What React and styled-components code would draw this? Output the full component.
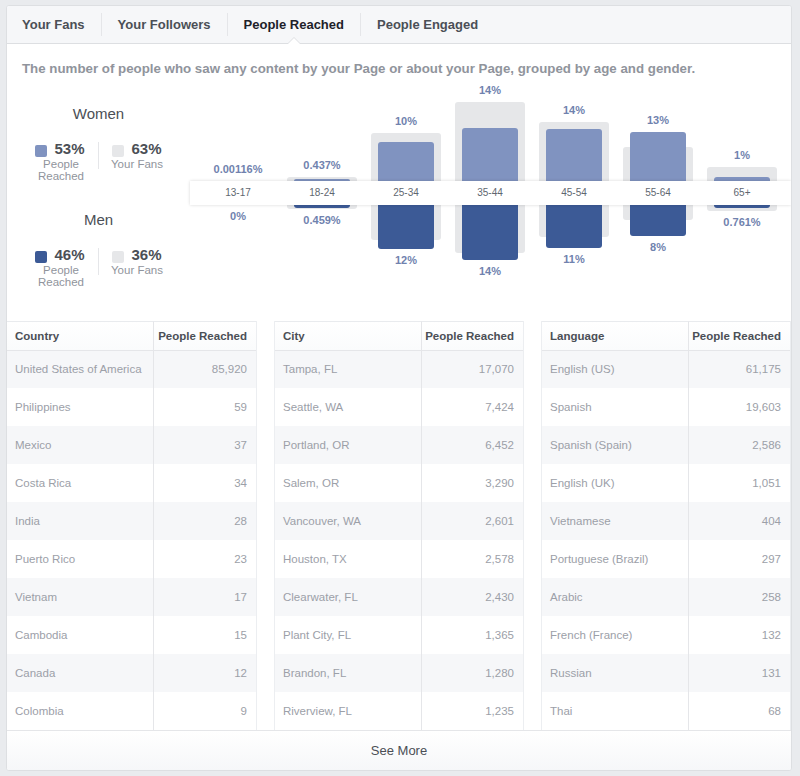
import React from 'react';
import styled, { createGlobalStyle } from 'styled-components';

const GlobalStyle = createGlobalStyle`
  body {
    margin: 0;
    padding: 5px 8px 6px 6px;
    background: #e9ebee;
    font-family: "Liberation Sans", Arial, Helvetica, sans-serif;
  }
`;

const Card = styled.div`
  width: 786px;
  box-sizing: border-box;
  background: #fff;
  border: 1px solid #dddfe2;
  border-radius: 3px;
  overflow: hidden;
`;

const Tabs = styled.div`
  display: flex;
  align-items: center;
  height: 37px;
  padding-left: 15px;
  background: #f6f7f9;
  border-bottom: 1px solid #dddfe2;
`;

const Tab = styled.div`
  position: relative;
  height: 23px;
  line-height: 23px;
  padding: 0 16px;
  font-size: 13px;
  font-weight: bold;
  color: ${p => (p.$active ? '#1d2129' : '#4b4f56')};
  border-right: ${p => (p.$last ? 'none' : '1px solid #e5e6e9')};
  &:first-child {
    padding-left: 0;
  }
  ${p => p.$active && `
    &::after {
      content: '';
      position: absolute;
      left: 50%;
      bottom: -8px;
      margin-left: -6px;
      border: 6px solid transparent;
      border-bottom-color: #fff;
      filter: drop-shadow(0 -1px 0 #dddfe2);
    }
  `}
`;

const ChartSection = styled.div`
  padding: 18px 0 16px 15px;
`;

const Description = styled.div`
  font-size: 13.3px;
  line-height: 14px;
  font-weight: bold;
  color: #90949c;
  margin-bottom: 5px;
  white-space: nowrap;
`;

const ChartBody = styled.div`
  display: flex;
  align-items: flex-start;
`;

const Legend = styled.div`
  width: 153px;
  margin-right: 15px;
  padding-top: 24px;
`;

const GenderBlock = styled.div`
  & + & {
    margin-top: 29px;
  }
`;

const GenderTitle = styled.div`
  text-align: center;
  font-size: 15px;
  line-height: 18px;
  color: #4b4f56;
  margin-bottom: 17px;
`;

const LegendRow = styled.div`
  display: flex;
  justify-content: center;
  align-items: flex-start;
`;

const LegendItem = styled.div`
  width: 56px;
  display: flex;
  flex-direction: column;
  align-items: center;
`;

const LegendValue = styled.div`
  display: flex;
  align-items: center;
  gap: 7px;
  font-size: 15px;
  line-height: 18px;
  font-weight: bold;
  color: #4b4f56;
`;

const Swatch = styled.span`
  width: 12px;
  height: 12px;
  border-radius: 2px;
  background: ${p => p.$color};
  margin-top: 3px;
`;

const LegendLabel = styled.div`
  font-size: 11.5px;
  line-height: 12px;
  color: #90949c;
  text-align: center;
  white-space: ${p => (p.$nowrap ? 'nowrap' : 'normal')};
  width: 52px;
  padding-left: ${p => (p.$nowrap ? '0' : '2px')};
`;

const LegendDivider = styled.div`
  width: 1px;
  height: 27px;
  margin: 2px 10px 0;
  background: #e5e6e9;
`;

const Chart = styled.div`
  flex: 1;
  display: flex;
  flex-direction: column;
`;

const BarRow = styled.div`
  display: flex;
  height: 100px;
  padding: 0 7px 0 6px;
  align-items: ${p => (p.$top ? 'flex-end' : 'flex-start')};
`;

const Column = styled.div`
  width: 84px;
  display: flex;
  flex-direction: column;
  align-items: center;
`;

const Pct = styled.div`
  font-size: 11px;
  line-height: 13px;
  font-weight: bold;
  color: #7082ae;
  margin: ${p => (p.$top ? '0 0 5px' : '5px 0 0')};
`;

const Stack = styled.div`
  display: grid;
  justify-items: center;
  align-items: ${p => (p.$top ? 'end' : 'start')};
  height: ${p => p.$h}px;
  width: 72px;
`;

const FanBox = styled.div`
  grid-area: 1 / 1;
  width: 70px;
  height: ${p => p.$h}px;
  background: #e6e7e9;
  border-radius: ${p => (p.$top ? '3px 3px 0 0' : '0 0 3px 3px')};
`;

const Bar = styled.div`
  grid-area: 1 / 1;
  width: 56px;
  height: ${p => p.$h}px;
  background: ${p => (p.$top ? '#8093c0' : '#3c5a96')};
  border-radius: ${p => (p.$top ? '3px 3px 0 0' : '0 0 3px 3px')};
`;

const Band = styled.div`
  position: relative;
  z-index: 1;
  display: flex;
  height: 24px;
  padding: 0 7px 0 6px;
  background: #fff;
  box-shadow: 0 0 3px rgba(0, 0, 0, 0.16);
`;

const BandLabel = styled.div`
  width: 84px;
  text-align: center;
  font-size: 10px;
  line-height: 24px;
  color: #606770;
`;

const Tables = styled.div`
  display: grid;
  grid-template-columns: 250px 250px 1fr;
  column-gap: 17px;
`;

const Table = styled.div`
  display: grid;
  grid-template-columns: 146px 1fr;
  border-left: 1px solid #eceef1;
  border-right: 1px solid #eceef1;
  &:first-child {
    border-left: none;
  }
`;

const HeadCell = styled.div`
  height: 28px;
  line-height: 28px;
  border-top: 1px solid #e9ebee;
  border-bottom: 1px solid #e5e6e9;
  background: linear-gradient(#fff, #fafbfc);
  font-size: 11.5px;
  font-weight: bold;
  color: #4b4f56;
  padding: ${p => (p.$num ? '0 9px 0 0' : '0 0 0 8px')};
  text-align: ${p => (p.$num ? 'right' : 'left')};
  border-left: ${p => (p.$num ? '1px solid #e5e6e9' : 'none')};
  white-space: nowrap;
`;

const Cell = styled.div`
  height: ${p => (p.$first ? 37 : 38)}px;
  line-height: ${p => (p.$first ? 37 : 38)}px;
  font-size: 11.5px;
  color: #9ca0a8;
  background: ${p => (p.$alt ? '#f6f7f9' : '#fff')};
  padding: ${p => (p.$num ? '0 9px 0 0' : '0 0 0 8px')};
  text-align: ${p => (p.$num ? 'right' : 'left')};
  border-left: ${p => (p.$num ? '1px solid #e5e6e9' : 'none')};
  white-space: nowrap;
`;

const SeeMore = styled.div`
  height: 39px;
  line-height: 39px;
  border-top: 1px solid #e5e6e9;
  background: linear-gradient(#fff, #f6f7f9);
  text-align: center;
  font-size: 13px;
  color: #4b4f56;
`;

const ages = [
  { age: '13-17', w: '0.00116%', m: '0%', fanTop: 0, wTop: 0, fanBot: 0, mBot: 0 },
  { age: '18-24', w: '0.437%', m: '0.459%', fanTop: 4, wTop: 2, fanBot: 4, mBot: 3 },
  { age: '25-34', w: '10%', m: '12%', fanTop: 48, wTop: 39, fanBot: 35, mBot: 44 },
  { age: '35-44', w: '14%', m: '14%', fanTop: 79, wTop: 53, fanBot: 48, mBot: 55 },
  { age: '45-54', w: '14%', m: '11%', fanTop: 59, wTop: 52, fanBot: 32, mBot: 43 },
  { age: '55-64', w: '13%', m: '8%', fanTop: 34, wTop: 49, fanBot: 15, mBot: 31 },
  { age: '65+', w: '1%', m: '0.761%', fanTop: 14, wTop: 4, fanBot: 6, mBot: 3 },
];

const tables = [
  {
    title: 'Country',
    rows: [
      ['United States of America', '85,920'], ['Philippines', '59'], ['Mexico', '37'],
      ['Costa Rica', '34'], ['India', '28'], ['Puerto Rico', '23'], ['Vietnam', '17'],
      ['Cambodia', '15'], ['Canada', '12'], ['Colombia', '9'],
    ],
  },
  {
    title: 'City',
    rows: [
      ['Tampa, FL', '17,070'], ['Seattle, WA', '7,424'], ['Portland, OR', '6,452'],
      ['Salem, OR', '3,290'], ['Vancouver, WA', '2,601'], ['Houston, TX', '2,578'],
      ['Clearwater, FL', '2,430'], ['Plant City, FL', '1,365'], ['Brandon, FL', '1,280'],
      ['Riverview, FL', '1,235'],
    ],
  },
  {
    title: 'Language',
    rows: [
      ['English (US)', '61,175'], ['Spanish', '19,603'], ['Spanish (Spain)', '2,586'],
      ['English (UK)', '1,051'], ['Vietnamese', '404'], ['Portuguese (Brazil)', '297'],
      ['Arabic', '258'], ['French (France)', '132'], ['Russian', '131'], ['Thai', '68'],
    ],
  },
];

const genders = [
  { title: 'Women', reached: '53%', fans: '63%', color: '#8093c0' },
  { title: 'Men', reached: '46%', fans: '36%', color: '#3c5a96' },
];

export default function App() {
  return (
    <>
      <GlobalStyle />
      <Card>
        <Tabs>
          <Tab>Your Fans</Tab>
          <Tab>Your Followers</Tab>
          <Tab $active>People Reached</Tab>
          <Tab $last>People Engaged</Tab>
        </Tabs>

        <ChartSection>
          <Description>
            The number of people who saw any content by your Page or about your Page, grouped by age and gender.
          </Description>
          <ChartBody>
            <Legend>
              {genders.map(g => (
                <GenderBlock key={g.title}>
                  <GenderTitle>{g.title}</GenderTitle>
                  <LegendRow>
                    <LegendItem>
                      <LegendValue><Swatch $color={g.color} />{g.reached}</LegendValue>
                      <LegendLabel>People Reached</LegendLabel>
                    </LegendItem>
                    <LegendDivider />
                    <LegendItem>
                      <LegendValue><Swatch $color="#e6e7e9" />{g.fans}</LegendValue>
                      <LegendLabel $nowrap>Your Fans</LegendLabel>
                    </LegendItem>
                  </LegendRow>
                </GenderBlock>
              ))}
            </Legend>

            <Chart>
              <BarRow $top>
                {ages.map(a => (
                  <Column key={a.age}>
                    <Pct $top>{a.w}</Pct>
                    <Stack $top $h={Math.max(a.fanTop, a.wTop)}>
                      {a.fanTop > 0 && <FanBox $top $h={a.fanTop} />}
                      {a.wTop > 0 && <Bar $top $h={a.wTop} />}
                    </Stack>
                  </Column>
                ))}
              </BarRow>
              <Band>
                {ages.map(a => <BandLabel key={a.age}>{a.age}</BandLabel>)}
              </Band>
              <BarRow>
                {ages.map(a => (
                  <Column key={a.age}>
                    <Stack $h={Math.max(a.fanBot, a.mBot)}>
                      {a.fanBot > 0 && <FanBox $h={a.fanBot} />}
                      {a.mBot > 0 && <Bar $h={a.mBot} />}
                    </Stack>
                    <Pct>{a.m}</Pct>
                  </Column>
                ))}
              </BarRow>
            </Chart>
          </ChartBody>
        </ChartSection>

        <Tables>
          {tables.map(t => (
            <Table key={t.title}>
              <HeadCell>{t.title}</HeadCell>
              <HeadCell $num>People Reached</HeadCell>
              {t.rows.map(([name, val], i) => (
                <React.Fragment key={name}>
                  <Cell $alt={i % 2 === 0} $first={i === 0}>{name}</Cell>
                  <Cell $num $alt={i % 2 === 0} $first={i === 0}>{val}</Cell>
                </React.Fragment>
              ))}
            </Table>
          ))}
        </Tables>
        <SeeMore>See More</SeeMore>
      </Card>
    </>
  );
}
